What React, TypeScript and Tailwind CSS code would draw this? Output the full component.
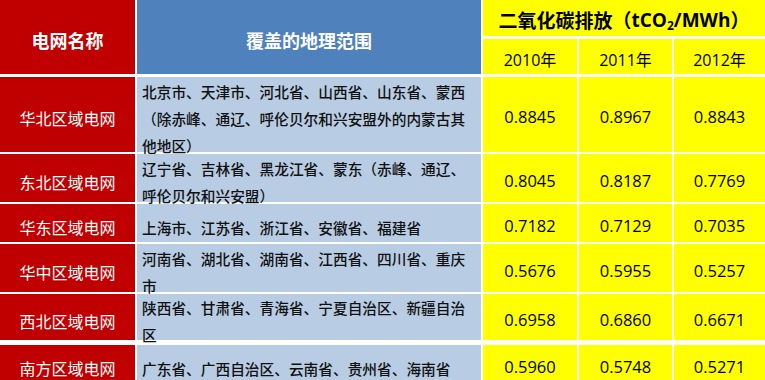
import React from "react";

type Row = { name: string; lines: string[]; vals: string[]; cls: string };

const rows: Row[] = [
  {
    name: "华北区域电网",
    lines: ["北京市、天津市、河北省、山西省、山东省、蒙西", "（除赤峰、通辽、呼伦贝尔和兴安盟外的内蒙古其", "他地区）"],
    vals: ["0.8845", "0.8967", "0.8843"],
    cls: "h-[75px] mt-[3px]",
  },
  {
    name: "东北区域电网",
    lines: ["辽宁省、吉林省、黑龙江省、蒙东（赤峰、通辽、", "呼伦贝尔和兴安盟）"],
    vals: ["0.8045", "0.8187", "0.7769"],
    cls: "h-[48px] mt-[2px]",
  },
  {
    name: "华东区域电网",
    lines: ["上海市、江苏省、浙江省、安徽省、福建省"],
    vals: ["0.7182", "0.7129", "0.7035"],
    cls: "h-[38px] mt-[2px]",
  },
  {
    name: "华中区域电网",
    lines: ["河南省、湖北省、湖南省、江西省、四川省、重庆", "市"],
    vals: ["0.5676", "0.5955", "0.5257"],
    cls: "h-[48px] mt-[2px]",
  },
  {
    name: "西北区域电网",
    lines: ["陕西省、甘肃省、青海省、宁夏自治区、新疆自治", "区"],
    vals: ["0.6958", "0.6860", "0.6671"],
    cls: "h-[46px] mt-[2px]",
  },
  {
    name: "南方区域电网",
    lines: ["广东省、广西自治区、云南省、贵州省、海南省"],
    vals: ["0.5960", "0.5748", "0.5271"],
    cls: "h-[38px] mt-[5px]",
  },
];

export default function App() {
  return (
    <div className="w-[765px] h-[380px] bg-white overflow-hidden font-['Noto_Sans_CJK_SC','Noto_Sans',sans-serif]">
      <div className="grid grid-cols-[135px_344px_94px_93px_91px] grid-rows-[36px_35px] gap-x-[2px] gap-y-[3px]">
        <div className="row-span-2 bg-[#c00000] flex items-center justify-center pt-[6px] text-white font-bold text-[18px]">
          电网名称
        </div>
        <div className="row-span-2 bg-[#4f81bd] flex items-center justify-center pt-[6px] text-white font-bold text-[18px]">
          覆盖的地理范围
        </div>
        <div className="col-span-3 bg-[#ffff00] flex items-center justify-center pt-[4px] text-black font-bold text-[19px] whitespace-nowrap">
          二氧化碳排放（
          <span className="font-['Open_Sans','Noto_Sans_CJK_SC',sans-serif]">
            tCO<sub className="text-[12px]">2</sub>/MWh
          </span>
          ）
        </div>
        {["2010年", "2011年", "2012年"].map((y) => (
          <div
            key={y}
            className="bg-[#ffff00] flex items-center justify-center pt-[7px] text-black text-[16px] font-['Open_Sans','Noto_Sans_CJK_SC',sans-serif]"
          >
            {y}
          </div>
        ))}
      </div>
      {rows.map((r) => (
        <div
          key={r.name}
          className={`grid grid-cols-[135px_344px_94px_93px_91px] grid-rows-1 gap-x-[2px] ${r.cls}`}
        >
          <div className="bg-[#c00000] flex items-center justify-center pt-[7px] text-white text-[16px] min-h-0">
            {r.name}
          </div>
          <div className="bg-[#b8cce4] flex flex-col justify-center pt-[8px] pl-[5px] text-[#111111] font-medium text-[14.7px] leading-[27px] whitespace-nowrap min-h-0">
            {r.lines.map((l, i) => (
              <div key={i}>{l}</div>
            ))}
          </div>
          {r.vals.map((v, i) => (
            <div
              key={i}
              className="bg-[#ffff00] flex items-center justify-center pt-[6px] text-black text-[16.5px] min-h-0 font-['Open_Sans','Noto_Sans_CJK_SC',sans-serif]"
            >
              {v}
            </div>
          ))}
        </div>
      ))}
    </div>
  );
}
